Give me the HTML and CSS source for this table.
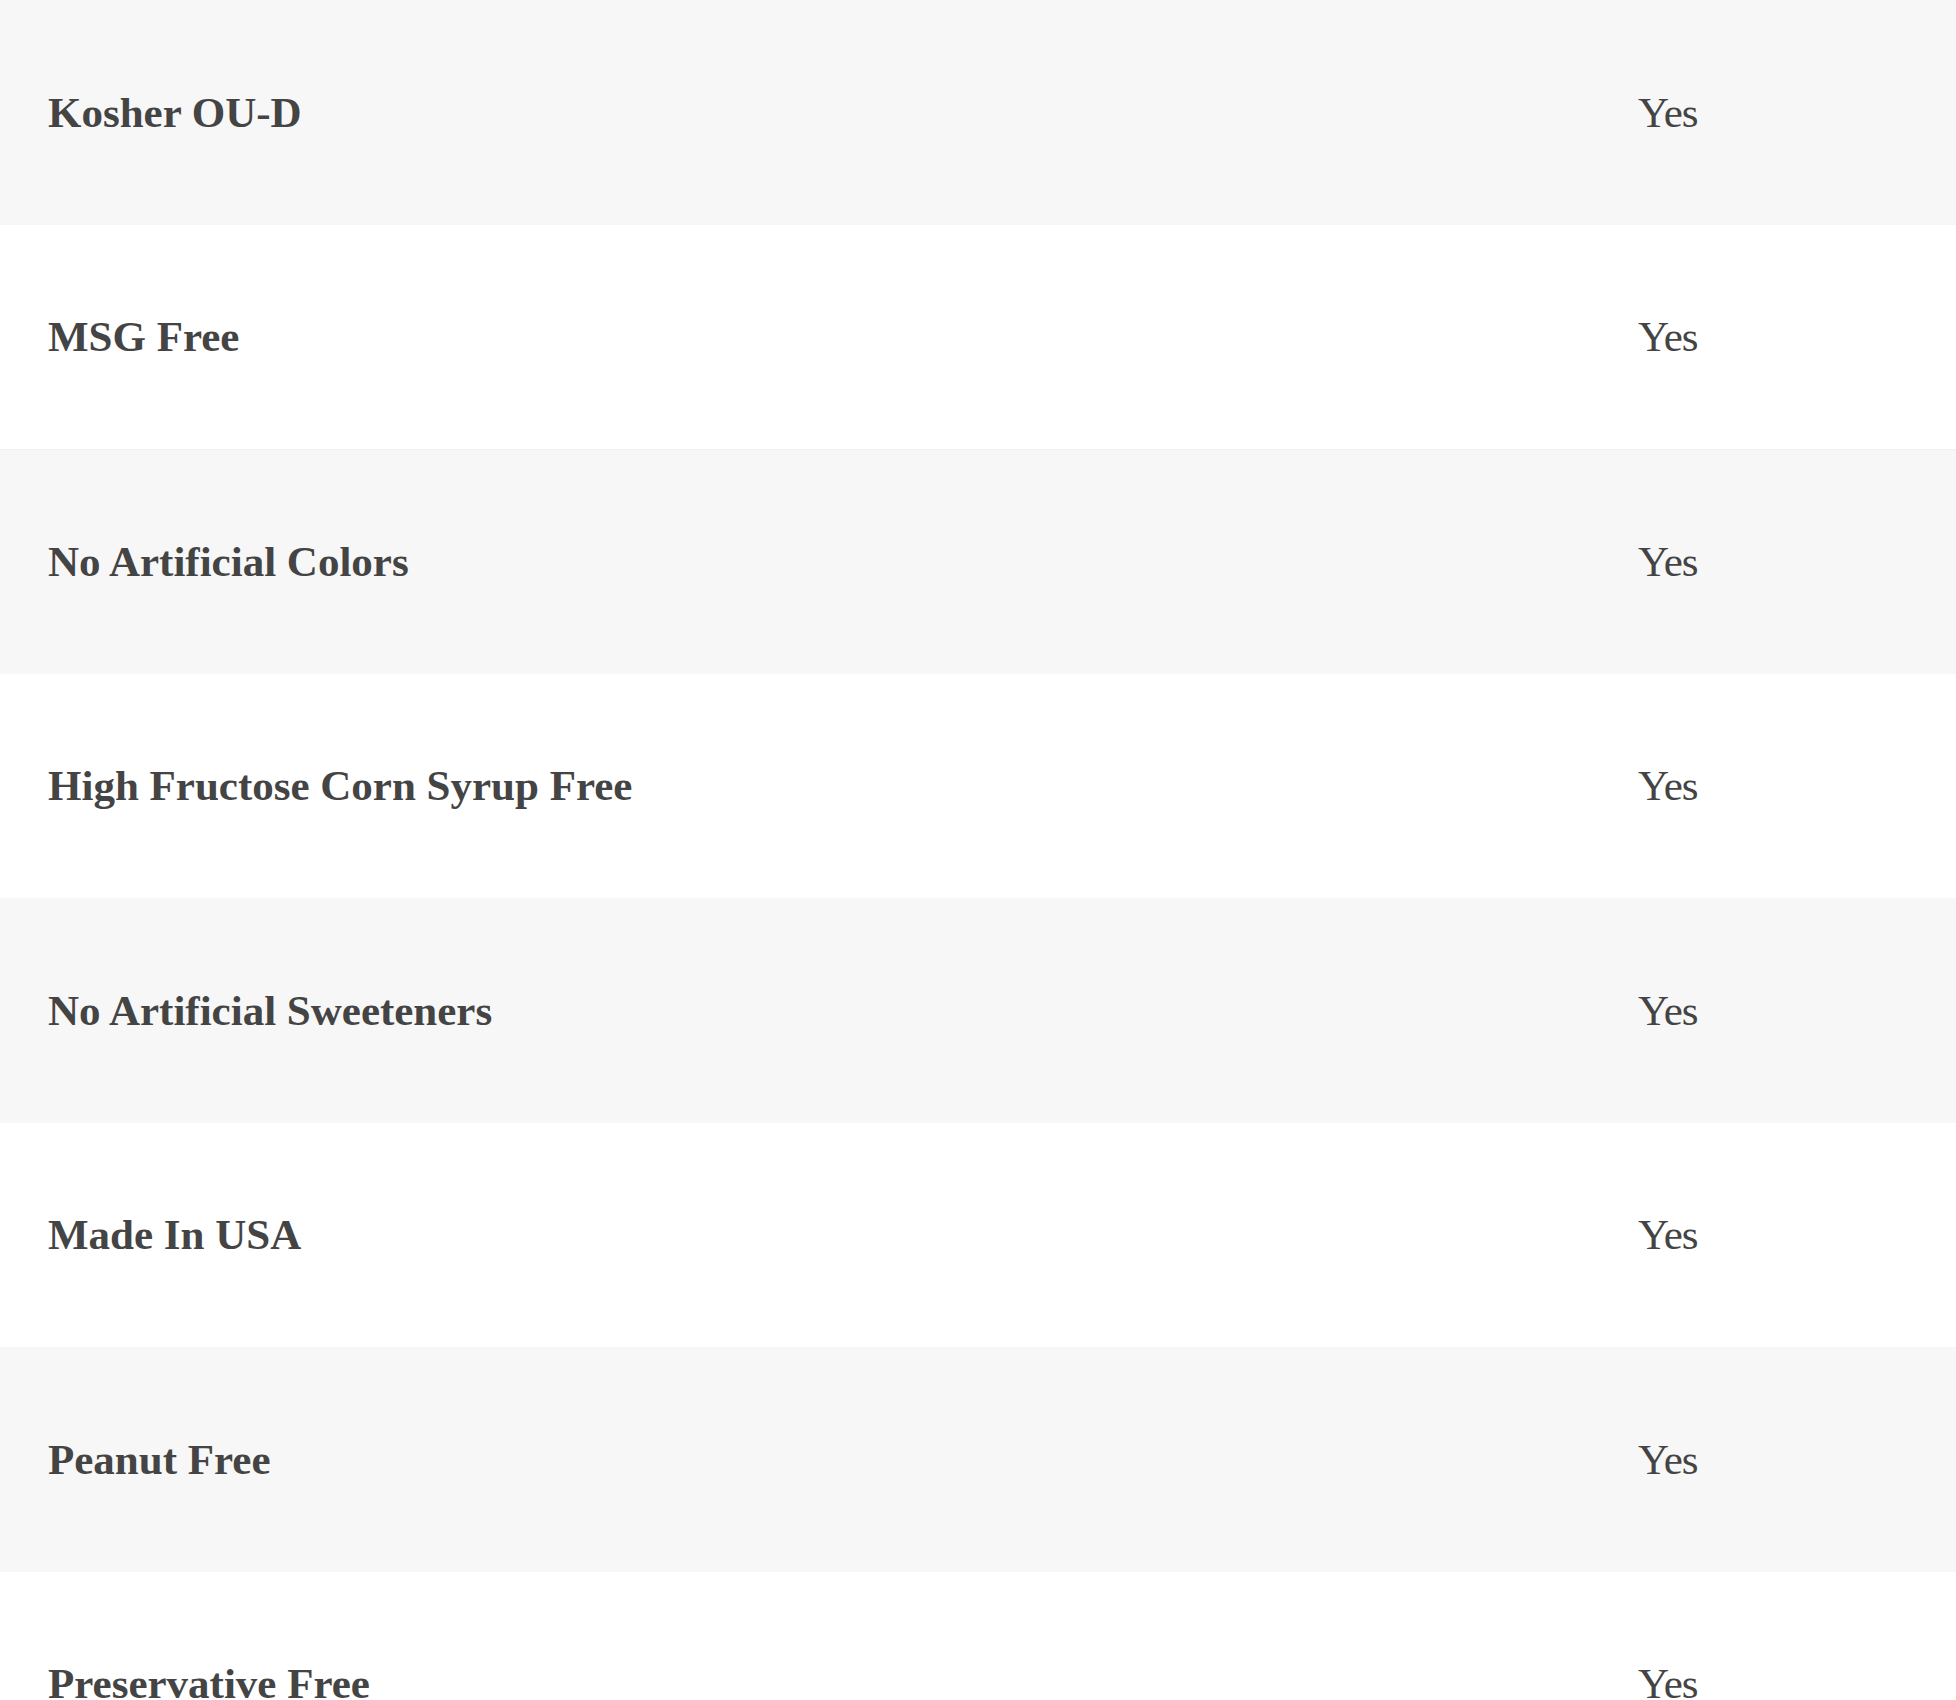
FILE: index.html
```html
<!DOCTYPE html>
<html lang="en">
<head>
    <meta charset="UTF-8">
    <meta name="viewport" content="width=device-width, initial-scale=1.0">
    <title>Product Attributes</title>
    <link rel="stylesheet" href="styles.css">
</head>
<body>
    <div class="attributes">
        <div class="row">
            <div class="label">Kosher OU-D</div>
            <div class="value">Yes</div>
        </div>
        <div class="row">
            <div class="label">MSG Free</div>
            <div class="value">Yes</div>
        </div>
        <div class="row">
            <div class="label">No Artificial Colors</div>
            <div class="value">Yes</div>
        </div>
        <div class="row">
            <div class="label">High Fructose Corn Syrup Free</div>
            <div class="value">Yes</div>
        </div>
        <div class="row">
            <div class="label">No Artificial Sweeteners</div>
            <div class="value">Yes</div>
        </div>
        <div class="row">
            <div class="label">Made In USA</div>
            <div class="value">Yes</div>
        </div>
        <div class="row">
            <div class="label">Peanut Free</div>
            <div class="value">Yes</div>
        </div>
        <div class="row">
            <div class="label">Preservative Free</div>
            <div class="value">Yes</div>
        </div>
    </div>
</body>
</html>
```

FILE: styles.css
```css
body {
    margin: 0;
    background: #fff;
    font-family: "Liberation Serif", "Times New Roman", serif;
    color: #444;
}
.attributes {
    display: flex;
    flex-direction: column;
}
.row {
    display: grid;
    grid-template-columns: 1fr 318px;
    align-items: center;
    height: 224.5px;
    box-sizing: border-box;
    padding-left: 48px;
    font-size: 43px;
}
.row:nth-child(odd) {
    background: #f7f7f7;
}
.row:nth-child(3) {
    border-top: 1px solid #f1f1f1;
}
.label {
    font-weight: bold;
}
.value {
    letter-spacing: -1px;
}
```
